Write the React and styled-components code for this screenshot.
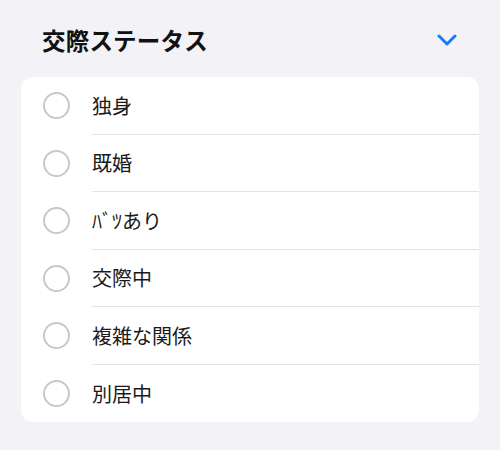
import React from "react";
import styled, { createGlobalStyle } from "styled-components";

const Global = createGlobalStyle`
  html, body { margin: 0; padding: 0; background: #f2f2f7; }
  body { font-family: "Noto Sans CJK JP", "Noto Sans", sans-serif; -webkit-font-smoothing: antialiased; }
`;

const Page = styled.div`
  padding: 0 21px;
  width: 500px;
  box-sizing: border-box;
`;

const Header = styled.div`
  display: flex;
  align-items: center;
  justify-content: space-between;
  height: 40px;
  padding: 20px 22px 17px 21px;
`;

const Title = styled.h2`
  margin: 0;
  font-size: 23.5px;
  font-weight: 700;
  color: #111;
  letter-spacing: 0.2px;
`;

const Chevron = styled.svg`
  width: 20px;
  height: 12px;
  display: block;
`;

const Card = styled.div`
  background: #fff;
  border-radius: 12px;
  overflow: hidden;
`;

const Row = styled.div`
  display: flex;
  align-items: stretch;
  height: 57.5px;
  padding-left: 22px;
`;

const RadioWrap = styled.div`
  display: flex;
  align-items: center;
  margin-right: 22px;
`;

const Radio = styled.span`
  width: 23px;
  height: 23px;
  border-radius: 50%;
  border: 2px solid #c8c8cb;
  display: block;
`;

const Content = styled.div`
  flex: 1;
  display: flex;
  align-items: center;
  border-bottom: ${(p) => (p.$last ? "none" : "1px solid #e4e4e7")};
  font-size: 20px;
  color: #1a1a1a;
`;

const items = ["独身", "既婚", "ﾊﾞﾂあり", "交際中", "複雑な関係", "別居中"];

export default function App() {
  return (
    <Page>
      <Global />
      <Header>
        <Title>交際ステータス</Title>
        <Chevron viewBox="0 0 20 12">
          <path d="M2 2 L10 10 L18 2" fill="none" stroke="#1a7cf0" strokeWidth="3" strokeLinecap="round" strokeLinejoin="round" />
        </Chevron>
      </Header>
      <Card>
        {items.map((t, i) => (
          <Row key={t}>
            <RadioWrap><Radio /></RadioWrap>
            <Content $last={i === items.length - 1}>{t}</Content>
          </Row>
        ))}
      </Card>
    </Page>
  );
}
